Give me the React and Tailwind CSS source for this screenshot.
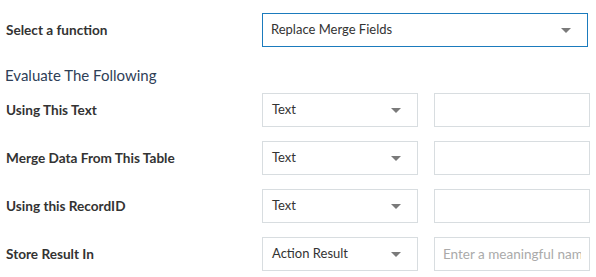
const Caret = () => (
  <svg width="10" height="5" viewBox="0 0 10 5" className="shrink-0">
    <path d="M0 0 L10 0 L5 5 Z" fill="#7a7a7a" />
  </svg>
);

const SelectBox = ({ value, wide }) => (
  <div
    className={`h-[34px] flex items-center justify-between pr-[16px] bg-white text-[13px] text-[#333] ${
      wide
        ? "w-[326px] pl-[8px] border border-[#1b7bbd]"
        : "w-[156px] pl-[9px] border border-[#d8dde0]"
    }`}
  >
    <span>{value}</span>
    <Caret />
  </div>
);

const rows = [
  { label: "Using This Text", value: "Text" },
  { label: "Merge Data From This Table", value: "Text" },
  { label: "Using this RecordID", value: "Text" },
  { label: "Store Result In", value: "Action Result", placeholder: "Enter a meaningful name" },
];

export default function App() {
  return (
    <div
      className="w-[596px] h-[277px] bg-white pt-[13px] pl-[6px] overflow-hidden"
      style={{ fontFamily: "Lato, 'Open Sans', sans-serif" }}
    >
      <div className="flex items-center h-[34px]">
        <div className="w-[256px] text-[13.6px] font-bold text-[#333]">Select a function</div>
        <SelectBox value="Replace Merge Fields" wide />
      </div>

      <div className="mt-[18px] mb-[8px] h-[20px] flex items-center -ml-[1px] text-[15px] text-[#2e4057]">
        Evaluate The Following
      </div>

      <div className="flex flex-col gap-[14px]">
        {rows.map((row) => (
          <div key={row.label} className="flex items-center h-[34px]">
            <div className="w-[256px] text-[13.6px] font-bold text-[#333]">{row.label}</div>
            <SelectBox value={row.value} />
            <input
              className="ml-[16px] w-[156px] h-[34px] border border-[#d8dde0] px-[8px] text-[13.5px] text-[#333] placeholder:text-[#aaa] outline-none"
              placeholder={row.placeholder || ""}
            />
          </div>
        ))}
      </div>
    </div>
  );
}
